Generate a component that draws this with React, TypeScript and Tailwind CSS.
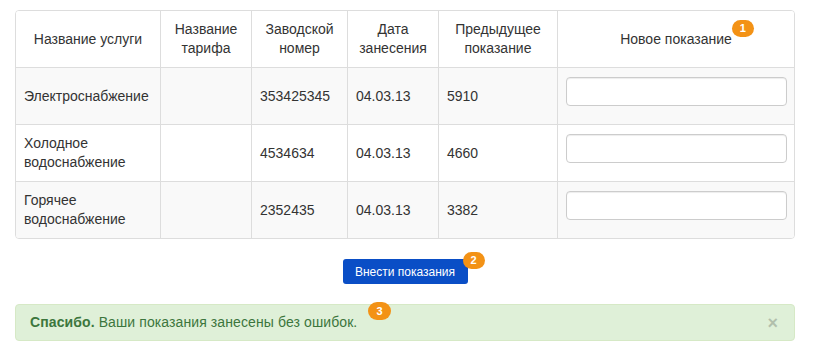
const rows = [
  { name: ["Электроснабжение"], serial: "353425345", date: "04.03.13", prev: "5910" },
  { name: ["Холодное", "водоснабжение"], serial: "4534634", date: "04.03.13", prev: "4660" },
  { name: ["Горячее", "водоснабжение"], serial: "2352435", date: "04.03.13", prev: "3382" },
];

function Badge({ n, className }: { n: number; className: string }) {
  return (
    <span
      className={
        "absolute flex h-[17px] w-[22px] items-center justify-center rounded-full bg-[#f39216] text-[11px] font-bold leading-none text-white " +
        className
      }
    >
      {n}
    </span>
  );
}

export default function App() {
  const cols = "grid grid-cols-[144px_91px_96px_91px_119px_1fr]";
  const cell = "border-l border-[#ddd] px-2 flex items-center";

  return (
    <div
      className="min-h-[353px] w-[825px] bg-white px-[15px] pt-[10px] text-[14px] text-[#333]"
      style={{ fontFamily: '"Liberation Sans", Arial, sans-serif' }}
    >
      {/* таблица показаний */}
      <div className="w-[780px] overflow-hidden rounded-[4px] border border-[#ddd]">
        <div className={cols + " h-[56px] bg-white text-center leading-[19px]"}>
          <div className="flex items-center justify-center px-2">Название услуги</div>
          <div className={cell + " justify-center"}>
            Название
            <br />
            тарифа
          </div>
          <div className={cell + " justify-center"}>
            Заводской
            <br />
            номер
          </div>
          <div className={cell + " justify-center"}>
            Дата
            <br />
            занесения
          </div>
          <div className={cell + " justify-center"}>
            Предыдущее
            <br />
            показание
          </div>
          <div className={cell + " justify-center"}>
            <span className="relative">
              Новое показание
              <Badge n={1} className="left-full top-[-10px] ml-0" />
            </span>
          </div>
        </div>

        {rows.map((r, i) => (
          <div
            key={r.serial}
            className={
              cols +
              " h-[57px] border-t border-[#ddd] leading-[19px] " +
              (i % 2 === 0 ? "bg-[#f9f9f9]" : "bg-white")
            }
          >
            <div className="flex flex-col justify-center px-2">
              {r.name.map((l) => (
                <span key={l}>{l}</span>
              ))}
            </div>
            <div className={cell}></div>
            <div className={cell}>{r.serial}</div>
            <div className={cell}>{r.date}</div>
            <div className={cell}>{r.prev}</div>
            <div className="border-l border-[#ddd] pl-2 pr-[7px] pt-[9px]">
              <input
                type="text"
                className="block h-[29px] w-full rounded-[4px] border border-[#ccc] bg-white shadow-[inset_0_1px_1px_rgba(0,0,0,0.075)] outline-none"
              />
            </div>
          </div>
        ))}
      </div>

      <div className="flex w-[780px] justify-center pt-[20px]">
        <button className="relative h-[25px] w-[125px] rounded-[3px] bg-[#0a4ec6] text-[12px] text-white">
          Внести показания
          <Badge n={2} className="right-[-17px] top-[-7px]" />
        </button>
      </div>

      <div className="relative mt-[20px] flex h-[37px] w-[780px] items-center rounded-[4px] border border-[#d6e9c6] bg-[#dff0d8] px-[14px] text-[#3c763d]">
        <span className="tracking-[0.1px]">
          <b>Спасибо.</b> Ваши показания занесены без ошибок.
        </span>
        <Badge n={3} className="left-[352px] top-[-3px] h-[18px] w-[23px]" />
        <span className="ml-auto mr-[2px] text-[18px] font-bold leading-none text-black opacity-20">
          ×
        </span>
      </div>
    </div>
  );
}
